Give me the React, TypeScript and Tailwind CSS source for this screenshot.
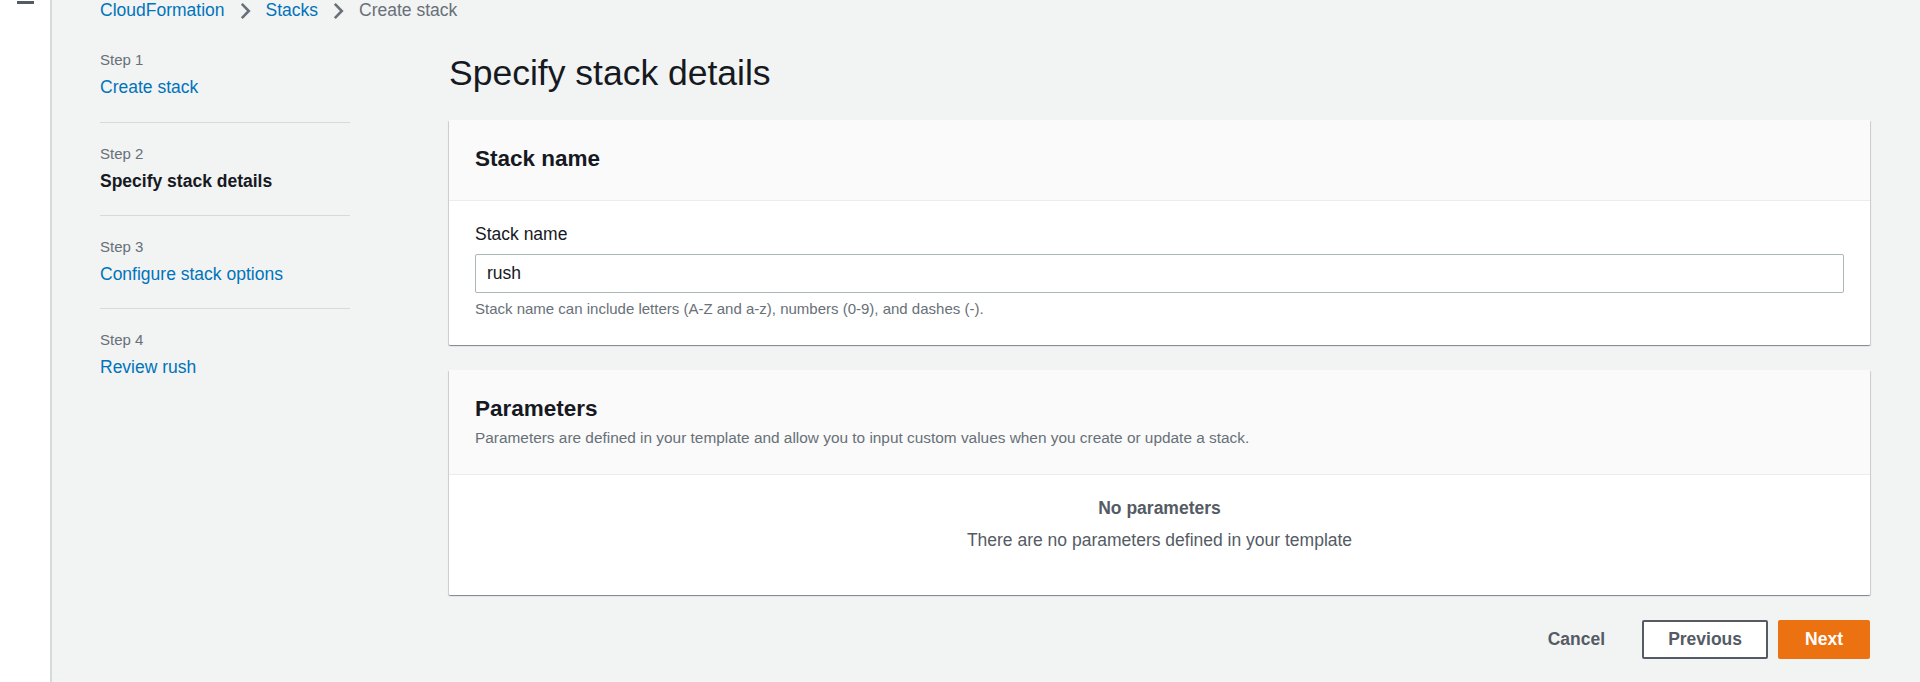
import { ReactNode } from 'react';

const steps = [
  { label: 'Step 1', title: 'Create stack', current: false },
  { label: 'Step 2', title: 'Specify stack details', current: true },
  { label: 'Step 3', title: 'Configure stack options', current: false },
  { label: 'Step 4', title: 'Review rush', current: false },
];

const Chevron = () => (
  <svg width="11" height="18" viewBox="0 0 11 18" className="shrink-0 mt-[1px]">
    <polyline points="1.8,1.8 8.8,9 1.8,16.2" fill="none" stroke="#687078" strokeWidth="2.6" />
  </svg>
);

const Card = ({ header, children }: { header: ReactNode; children: ReactNode }) => (
  <div className="bg-white rounded-[1px] shadow-[0_1px_1px_0_rgba(0,28,36,0.3),1px_1px_1px_0_rgba(0,28,36,0.15),-1px_1px_1px_0_rgba(0,28,36,0.15)]">
    <div className="bg-[#fafafa] border-b border-[#eaeded] px-[26px] pt-[24px] pb-[26px]">{header}</div>
    {children}
  </div>
);

const App = () => {
  return (
    <div
      className="flex min-h-[682px] bg-[#f2f3f3] text-[#16191f]"
      style={{ fontFamily: '"Liberation Sans", Arial, sans-serif' }}
    >
      {/* collapsed side rail */}
      <div className="w-[52px] shrink-0 bg-white border-r-2 border-[#d5dbdb] pl-[17px] pt-[1px]">
        <div className="w-[17px] h-[3px] bg-[#545b64]" />
      </div>

      <div className="flex-1 pl-[48px] pr-[50px]">
        {/* breadcrumb */}
        <nav className="flex items-center gap-[15px] text-[17.5px] leading-[22px] -mt-[1px]">
          <span className="text-[#0073bb]">CloudFormation</span>
          <Chevron />
          <span className="text-[#0073bb]">Stacks</span>
          <Chevron />
          <span className="text-[#687078]">Create stack</span>
        </nav>

        <div className="flex mt-[30px]">
          {/* wizard steps */}
          <ul className="w-[250px] shrink-0 -mt-[1px]">
            {steps.map((step, i) => (
              <li
                key={step.label}
                className={i === 0 ? 'pb-[24px] border-b border-[#d5dbdb]' : i === steps.length - 1 ? 'pt-[21px]' : 'pt-[21px] pb-[23px] border-b border-[#d5dbdb]'}
              >
                <div className="text-[15px] leading-[20px] text-[#687078]">{step.label}</div>
                <div
                  className={
                    step.current
                      ? 'mt-[6px] text-[17.5px] leading-[22px] font-bold text-[#16191f]'
                      : 'mt-[6px] text-[17.5px] leading-[22px] text-[#0073bb]'
                  }
                >
                  {step.title}
                </div>
              </li>
            ))}
          </ul>

          {/* main */}
          <main className="flex-1 ml-[99px]">
            <h1 className="text-[35.5px] leading-[44px] font-normal text-[#16191f]">Specify stack details</h1>

            <div className="mt-[25px]">
              <Card header={<h2 className="text-[22.5px] leading-[30px] font-bold">Stack name</h2>}>
                <div className="px-[26px] pt-[22px] pb-[26px]">
                  <label className="block text-[17.5px] leading-[22px] text-[#16191f]">Stack name</label>
                  <div className="mt-[9px] h-[39px] border border-[#aab7b8] rounded-[2px] flex items-center px-[11px] text-[17.5px] text-[#16191f]">
                    rush
                  </div>
                  <p className="mt-[6px] text-[15px] leading-[20px] text-[#687078]">
                    Stack name can include letters (A-Z and a-z), numbers (0-9), and dashes (-).
                  </p>
                </div>
              </Card>
            </div>

            <div className="mt-[25px]">
              <Card
                header={
                  <>
                    <h2 className="text-[22.5px] leading-[30px] font-bold">Parameters</h2>
                    <p className="mt-[4px] text-[15.4px] leading-[20px] text-[#687078]">
                      Parameters are defined in your template and allow you to input custom values when you create or update a stack.
                    </p>
                  </>
                }
              >
                <div className="pt-[22px] pb-[44px] text-center text-[#545b64] text-[17.5px] leading-[22px]">
                  <div className="font-bold">No parameters</div>
                  <div className="mt-[10px]">There are no parameters defined in your template</div>
                </div>
              </Card>
            </div>

            {/* actions */}
            <div className="mt-[25px] flex justify-end gap-[10px] text-[17.5px] font-bold">
              <button className="h-[39px] px-[25px] border-2 border-transparent rounded-[2px] text-[#545b64]">Cancel</button>
              <button className="h-[39px] px-[24px] border-2 border-[#545b64] rounded-[2px] bg-white text-[#545b64]">Previous</button>
              <button className="h-[39px] px-[25px] border-2 border-[#ec7211] rounded-[2px] bg-[#ec7211] text-white">Next</button>
            </div>
          </main>
        </div>
      </div>
    </div>
  );
};

export default App;
